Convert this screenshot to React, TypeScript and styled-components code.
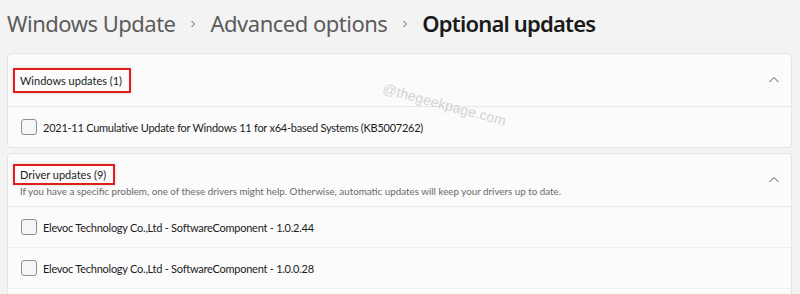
import React from "react";
import styled, { createGlobalStyle } from "styled-components";

const Global = createGlobalStyle`
  html, body { margin: 0; padding: 0; background: #f3f3f3; }
  body { font-family: Lato, "Noto Sans", sans-serif; color: #1b1b1b; overflow: hidden; }
`;

const Page = styled.div`
  position: relative;
  width: 800px;
  height: 294px;
  overflow: hidden;
  background: #f3f3f3;
`;

const Breadcrumb = styled.div`
  display: flex;
  align-items: center;
  height: 50px;
  padding: 0 0 0 7px;
`;

const Crumb = styled.span<{ $current?: boolean }>`
  font-family: "Noto Sans", sans-serif;
  font-size: 22px;
  letter-spacing: ${(p) => (p.$current ? "-0.8px" : "-0.5px")};
  font-weight: ${(p) => (p.$current ? 600 : 400)};
  color: ${(p) => (p.$current ? "#1a1a1a" : "#5c5c5c")};
  line-height: 1;
  padding-bottom: 4px;
`;

const Sep = styled.span`
  display: flex;
  align-items: center;
  justify-content: center;
  width: 35px;
  padding-bottom: 2px;
`;

const Stack = styled.div`
  display: flex;
  flex-direction: column;
  gap: 5px;
  padding: 3px 8px 0 7px;
`;

const Card = styled.section`
  background: #fbfbfb;
  border: 1px solid #e5e5e5;
  border-radius: 4px;
`;

const Header = styled.div`
  display: flex;
  align-items: center;
  justify-content: space-between;
  height: 52px;
  padding: 0 11px 0 5px;
  border-bottom: 1px solid #e8e8e8;
`;

const HeaderText = styled.div`
  display: flex;
  flex-direction: column;
  align-items: flex-start;
`;

const Marked = styled.span<{ $tall?: boolean }>`
  display: inline-block;
  border: 2px solid #e21b1b;
  padding: ${(p) => (p.$tall ? "3px 7px 3px 5px" : "1px 7px 1px 5px")};
  font-size: 11px;
  line-height: 15px;
  color: #1b1b1b;
  box-shadow: 0 0 3px rgba(0, 0, 0, 0.18);
`;

const Sub = styled.span`
  font-size: 9.8px;
  line-height: 12px;
  color: #6a6a6a;
  padding-left: 7px;
  white-space: nowrap;
`;

const Row = styled.label`
  display: flex;
  align-items: center;
  gap: 6px;
  height: 40px;
  padding: 0 13px;
  font-size: 11px;
  letter-spacing: -0.25px;
  color: #1b1b1b;
  & + & { border-top: 1px solid #f0f0f0; }
`;

const Box = styled.span`
  width: 14px;
  height: 14px;
  border: 1px solid #8f8f8f;
  border-radius: 3px;
  background: #f6f6f6;
  flex: none;
`;

const Watermark = styled.div`
  position: absolute;
  left: 383px;
  top: 80px;
  font-family: "Liberation Sans", sans-serif;
  font-size: 14px;
  color: #d2d2d2;
  transform: rotate(15deg);
  transform-origin: left center;
  letter-spacing: 0.1px;
  pointer-events: none;
`;

const Chevron = () => (
  <svg width="8" height="8" viewBox="0 0 8 8">
    <path d="M2.5 1 L5.5 4 L2.5 7" fill="none" stroke="#5c5c5c" strokeWidth="1" />
  </svg>
);

const ChevronUp = () => (
  <svg width="12" height="8" viewBox="0 0 12 8">
    <path d="M1.5 6 L6 1.5 L10.5 6" fill="none" stroke="#555" strokeWidth="1" />
  </svg>
);

const drivers = [
  "Elevoc Technology Co.,Ltd - SoftwareComponent - 1.0.2.44",
  "Elevoc Technology Co.,Ltd - SoftwareComponent - 1.0.0.28",
];

export default function App() {
  return (
    <Page>
      <Global />
      <Breadcrumb>
        <Crumb>Windows Update</Crumb>
        <Sep><Chevron /></Sep>
        <Crumb>Advanced options</Crumb>
        <Sep><Chevron /></Sep>
        <Crumb $current>Optional updates</Crumb>
      </Breadcrumb>
      <Stack>
        <Card>
          <Header>
            <HeaderText>
              <Marked $tall>Windows updates (1)</Marked>
            </HeaderText>
            <ChevronUp />
          </Header>
          <Row>
            <Box />
            2021-11 Cumulative Update for Windows 11 for x64-based Systems (KB5007262)
          </Row>
        </Card>
        <Card>
          <Header>
            <HeaderText>
              <Marked>Driver updates (9)</Marked>
              <Sub>
                If you have a specific problem, one of these drivers might help. Otherwise, automatic updates will keep your drivers up to date.
              </Sub>
            </HeaderText>
            <ChevronUp />
          </Header>
          {drivers.map((d) => (
            <Row key={d}>
              <Box />
              {d}
            </Row>
          ))}
          <Row aria-hidden />
        </Card>
      </Stack>
      <Watermark>@thegeekpage.com</Watermark>
    </Page>
  );
}
